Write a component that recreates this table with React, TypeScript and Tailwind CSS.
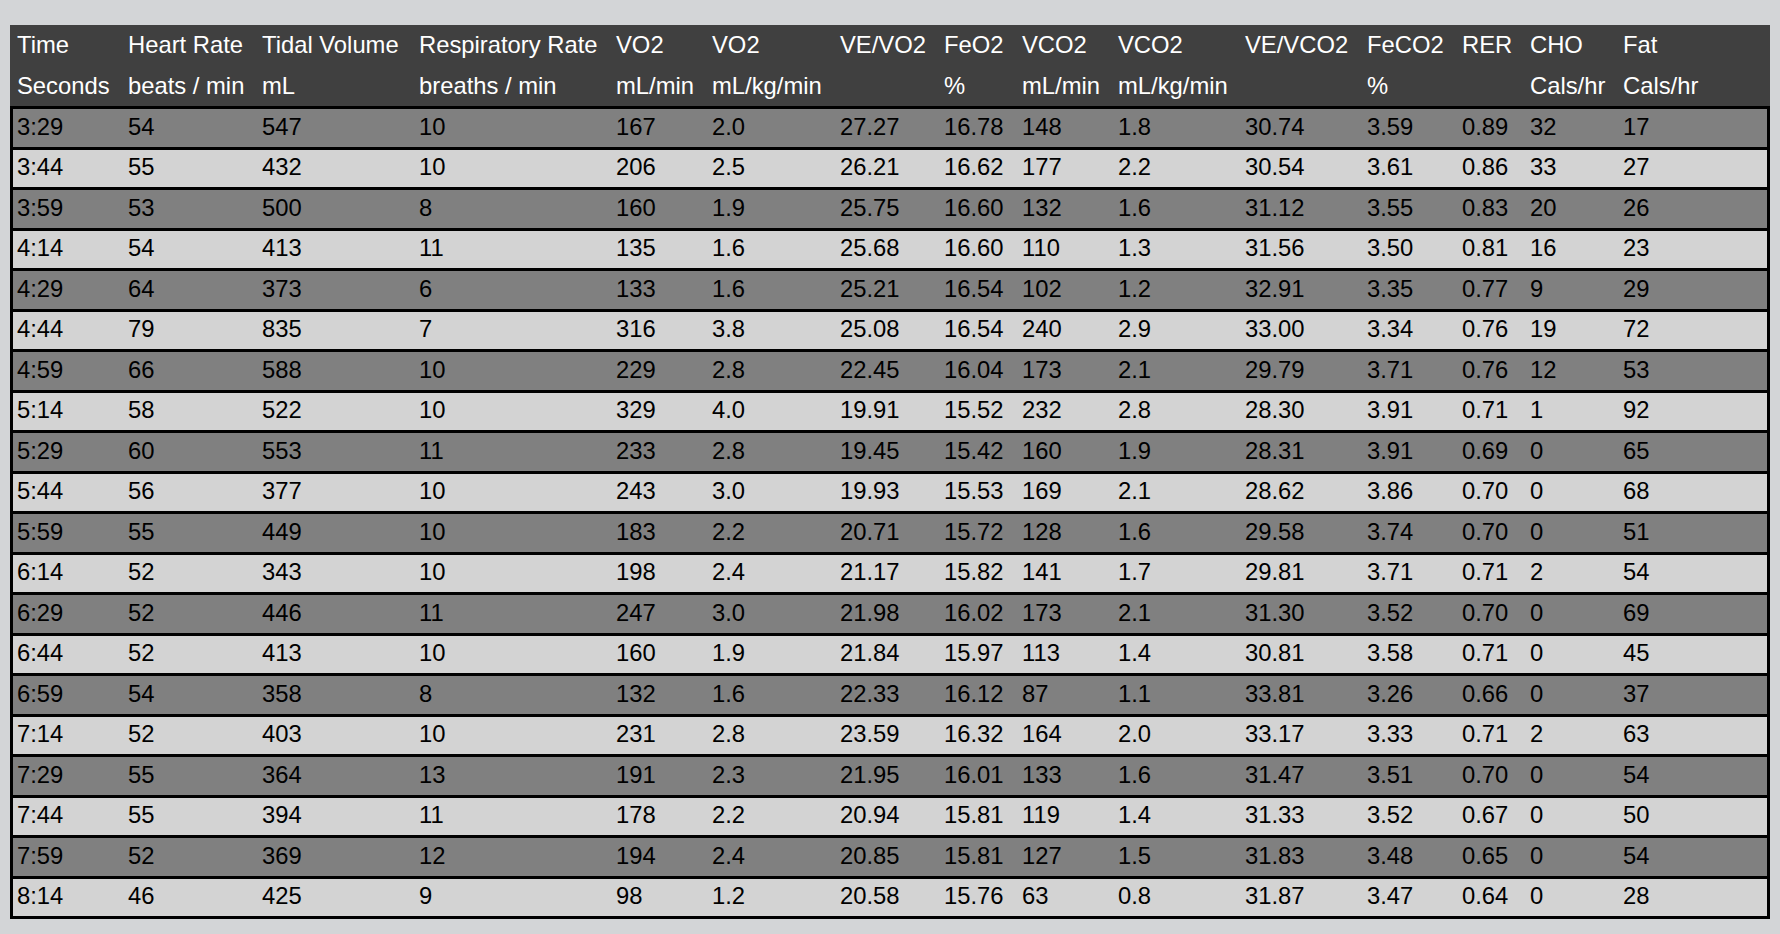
const cols = [
  { top: "Time", unit: "Seconds" },
  { top: "Heart Rate", unit: "beats / min" },
  { top: "Tidal Volume", unit: "mL" },
  { top: "Respiratory Rate", unit: "breaths / min" },
  { top: "VO2", unit: "mL/min" },
  { top: "VO2", unit: "mL/kg/min" },
  { top: "VE/VO2", unit: "" },
  { top: "FeO2", unit: "%" },
  { top: "VCO2", unit: "mL/min" },
  { top: "VCO2", unit: "mL/kg/min" },
  { top: "VE/VCO2", unit: "" },
  { top: "FeCO2", unit: "%" },
  { top: "RER", unit: "" },
  { top: "CHO", unit: "Cals/hr" },
  { top: "Fat", unit: "Cals/hr" },
];

const rows = [
  ["3:29", "54", "547", "10", "167", "2.0", "27.27", "16.78", "148", "1.8", "30.74", "3.59", "0.89", "32", "17"],
  ["3:44", "55", "432", "10", "206", "2.5", "26.21", "16.62", "177", "2.2", "30.54", "3.61", "0.86", "33", "27"],
  ["3:59", "53", "500", "8", "160", "1.9", "25.75", "16.60", "132", "1.6", "31.12", "3.55", "0.83", "20", "26"],
  ["4:14", "54", "413", "11", "135", "1.6", "25.68", "16.60", "110", "1.3", "31.56", "3.50", "0.81", "16", "23"],
  ["4:29", "64", "373", "6", "133", "1.6", "25.21", "16.54", "102", "1.2", "32.91", "3.35", "0.77", "9", "29"],
  ["4:44", "79", "835", "7", "316", "3.8", "25.08", "16.54", "240", "2.9", "33.00", "3.34", "0.76", "19", "72"],
  ["4:59", "66", "588", "10", "229", "2.8", "22.45", "16.04", "173", "2.1", "29.79", "3.71", "0.76", "12", "53"],
  ["5:14", "58", "522", "10", "329", "4.0", "19.91", "15.52", "232", "2.8", "28.30", "3.91", "0.71", "1", "92"],
  ["5:29", "60", "553", "11", "233", "2.8", "19.45", "15.42", "160", "1.9", "28.31", "3.91", "0.69", "0", "65"],
  ["5:44", "56", "377", "10", "243", "3.0", "19.93", "15.53", "169", "2.1", "28.62", "3.86", "0.70", "0", "68"],
  ["5:59", "55", "449", "10", "183", "2.2", "20.71", "15.72", "128", "1.6", "29.58", "3.74", "0.70", "0", "51"],
  ["6:14", "52", "343", "10", "198", "2.4", "21.17", "15.82", "141", "1.7", "29.81", "3.71", "0.71", "2", "54"],
  ["6:29", "52", "446", "11", "247", "3.0", "21.98", "16.02", "173", "2.1", "31.30", "3.52", "0.70", "0", "69"],
  ["6:44", "52", "413", "10", "160", "1.9", "21.84", "15.97", "113", "1.4", "30.81", "3.58", "0.71", "0", "45"],
  ["6:59", "54", "358", "8", "132", "1.6", "22.33", "16.12", "87", "1.1", "33.81", "3.26", "0.66", "0", "37"],
  ["7:14", "52", "403", "10", "231", "2.8", "23.59", "16.32", "164", "2.0", "33.17", "3.33", "0.71", "2", "63"],
  ["7:29", "55", "364", "13", "191", "2.3", "21.95", "16.01", "133", "1.6", "31.47", "3.51", "0.70", "0", "54"],
  ["7:44", "55", "394", "11", "178", "2.2", "20.94", "15.81", "119", "1.4", "31.33", "3.52", "0.67", "0", "50"],
  ["7:59", "52", "369", "12", "194", "2.4", "20.85", "15.81", "127", "1.5", "31.83", "3.48", "0.65", "0", "54"],
  ["8:14", "46", "425", "9", "98", "1.2", "20.58", "15.76", "63", "0.8", "31.87", "3.47", "0.64", "0", "28"],
];

// column widths measured off the reference, same for header and body
const grid =
  "grid grid-cols-[111px_134px_157px_197px_96px_128px_104px_78px_96px_127px_122px_95px_68px_93px_1fr]";

export default function App() {
  return (
    <div
      className="min-h-screen bg-[#d3d5d7] px-[10px] pt-[25px] text-[23.8px]"
      style={{ fontFamily: '"Liberation Sans", Arial, sans-serif' }}
    >
      <div className="w-[1760px]">
        {/* Header */}
        <div className="bg-[#404040] px-[3px] text-white">
          <div className={grid}>
            {cols.map((c, i) => (
              <div key={i} className="flex h-[40.5px] items-center whitespace-nowrap pl-[4px]">
                {c.top}
              </div>
            ))}
          </div>
          <div className={grid}>
            {cols.map((c, i) => (
              <div key={i} className="flex h-[40.5px] items-center whitespace-nowrap pl-[4px]">
                {c.unit}
              </div>
            ))}
          </div>
        </div>

        {/* Body */}
        <div className="border-b-[3px] border-black text-black">
          {rows.map((r, ri) => (
            <div
              key={ri}
              className={`${grid} border-x-[3px] border-t-[3px] border-black ${
                ri % 2 === 0 ? "bg-[#808080]" : "bg-[#d3d3d3]"
              }`}
            >
              {r.map((v, ci) => (
                <div key={ci} className="flex h-[37.5px] items-center whitespace-nowrap pb-[2px] pl-[4px]">
                  {v}
                </div>
              ))}
            </div>
          ))}
        </div>
      </div>
    </div>
  );
}
